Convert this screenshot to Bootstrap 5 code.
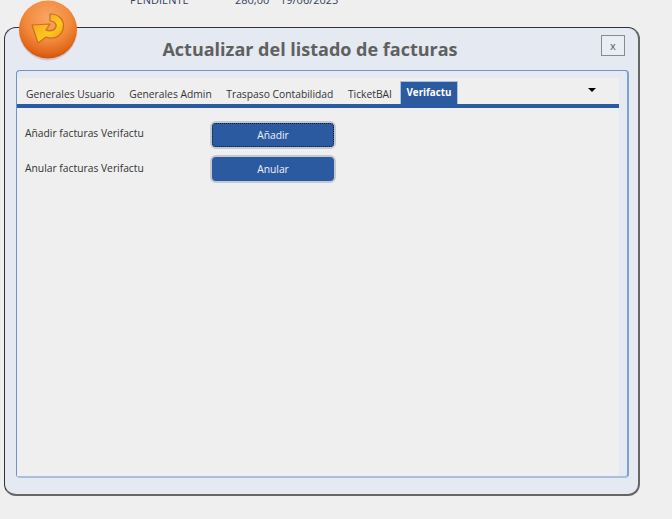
<!DOCTYPE html>
<html lang="es">
<head>
<meta charset="utf-8">
<title>Actualizar del listado de facturas</title>
<link href="https://cdn.jsdelivr.net/npm/bootstrap@5.3.0/dist/css/bootstrap.min.css" rel="stylesheet">
<style>
html,body{height:100%;}
body{background:#efefef;font-family:"Open Sans","Noto Sans",sans-serif;color:#333;overflow:hidden;width:672px;height:519px;}
.top-strip{height:27px;position:relative;}
.top-clip{height:6px;overflow:hidden;display:flex;align-items:flex-end;padding-left:130px;font-size:11px;line-height:12px;color:#33415a;}
.top-clip span{display:block;flex:none;}
.top-a{width:105px;}
.top-b{width:45px;}
.dlg{width:636px;height:469px;margin-left:4px;background:#e4e9f2;border:1px solid #333;border-right:2px solid #666;border-bottom:2px solid #666;border-radius:12px;position:relative;padding:42px 9px 16px 11px;}
.logo{position:absolute;left:18px;top:0;width:60px;height:62px;}
.dlg-title{position:absolute;left:0;right:23px;top:8px;margin:0;text-align:center;font-size:18px;line-height:27px;font-weight:700;color:#606060;}
.close-x{position:absolute;right:13px;top:7px;width:24px;height:21px;padding:0;border:1px solid #8a8a8a;border-radius:0;background:#e9edf5;font-size:11px;line-height:17px;color:#555;font-weight:500;}
.panel{height:100%;border-style:solid;border-width:1px 2px 2px 1px;border-color:#6f93c8 #7f9fcd #a9bfdc #6f93c8;border-radius:4px;padding:7px 8px 0 0;}
.panel-in{background:#efefef;height:100%;}
.tabs-row{height:30px;border-bottom:4px solid #2b5aa0;padding-left:3px;position:relative;flex-wrap:nowrap;align-items:flex-end;}
.tab-item{font-size:10.3px;line-height:14px;padding:0 6px 3px;margin-right:2.5px;color:#333;white-space:nowrap;text-decoration:none;}
.tab-item:hover{color:#333;}
.tab-on{background:#2b5aa0;color:#fff;font-weight:700;font-size:9.8px;border:1px solid #a9c0e0;border-bottom:0;padding:4px 5px 3px;height:23px;margin:0;}
.tab-on:hover{color:#fff;}
.tab-arrow{position:absolute;left:571px;top:10px;width:0;height:0;border-left:4px solid transparent;border-right:4px solid transparent;border-top:4px solid #000;}
.form-area{padding:10px 0 0 8px;}
.form-line{height:34px;display:flex;align-items:center;}
.form-line label{width:185px;margin:0 0 5px;font-size:10.3px;line-height:14px;color:#333;}
.form-line label.lbl-low{margin-bottom:3px;}
.act-btn{width:126px;height:28px;padding:0;background:#2b5aa0;border:2px solid #c4c8cf;border-radius:6px;color:#eef2f8;font-size:10.3px;font-weight:500;line-height:20px;position:relative;}
.act-btn:hover{background:#2b5aa0;color:#eef2f8;border-color:#c4c8cf;}
.act-focus::after{content:"";position:absolute;inset:0;border:1px dotted #0c1c38;border-radius:4px;}
</style>
</head>
<body>
<div class="top-strip">
  <div class="top-clip"><span class="top-a">PENDIENTE</span><span class="top-b">280,00</span><span>19/06/2025</span></div>
</div>
<div class="dlg">
  <h1 class="dlg-title">Actualizar del listado de facturas</h1>
  <button type="button" class="btn close-x">x</button>
  <div class="panel">
    <div class="panel-in">
      <nav class="nav tabs-row">
        <a class="tab-item" href="#">Generales Usuario</a>
        <a class="tab-item" href="#">Generales Admin</a>
        <a class="tab-item" href="#">Traspaso Contabilidad</a>
        <a class="tab-item" href="#">TicketBAI</a>
        <a class="tab-item tab-on" href="#">Verifactu</a>
        <span class="tab-arrow"></span>
      </nav>
      <div class="form-area">
        <div class="form-line"><label>Añadir facturas Verifactu</label><button type="button" class="btn act-btn act-focus">Añadir</button></div>
        <div class="form-line"><label class="lbl-low">Anular facturas Verifactu</label><button type="button" class="btn act-btn">Anular</button></div>
      </div>
    </div>
  </div>
</div>
<svg class="logo" viewBox="0 0 60 62" aria-hidden="true">
  <defs>
    <radialGradient id="orb" cx="50%" cy="30%" r="72%">
      <stop offset="0" stop-color="#f9a566"/>
      <stop offset=".55" stop-color="#f18a3c"/>
      <stop offset=".85" stop-color="#e2661a"/>
      <stop offset="1" stop-color="#c9520f"/>
    </radialGradient>
    <linearGradient id="arr" x1="0" y1="0" x2="1" y2="1">
      <stop offset="0" stop-color="#f5962f"/>
      <stop offset=".6" stop-color="#fdc81c"/>
      <stop offset="1" stop-color="#ee9320"/>
    </linearGradient>
  </defs>
  <ellipse cx="30" cy="31" rx="29" ry="29.5" fill="#b9a796" opacity=".45"/>
  <circle cx="30" cy="29.5" r="29" fill="url(#orb)"/>
  <path d="M32 14 C42 14 47 21 45 29 C43 37 35 40 28 37 L20 43 L14 25 L32 24 L28 30 C33 32 37 30 38 27 C39 24 36 21 32 21 Z" fill="url(#arr)" stroke="#c9701f" stroke-width="1.2" stroke-linejoin="round"/>
</svg>
</body>
</html>
